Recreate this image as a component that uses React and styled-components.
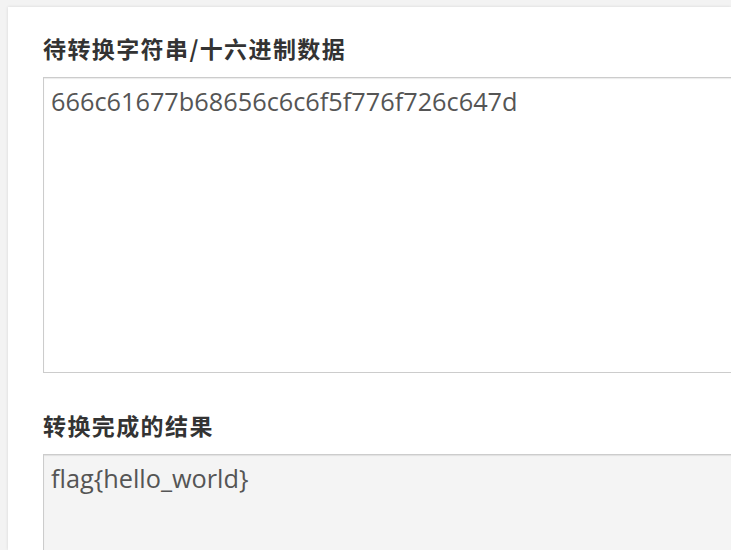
import React from "react";
import styled, { createGlobalStyle } from "styled-components";

const Global = createGlobalStyle`
  html, body { margin: 0; padding: 0; background: #f3f3f3; overflow: hidden; }
  body { font-family: "Open Sans", "Noto Sans CJK SC", sans-serif; }
`;

const Page = styled.div`
  padding: 7px 0 0 8px;
  height: 550px;
  width: 731px;
  box-sizing: border-box;
  overflow: hidden;
`;

const Card = styled.section`
  background: #fff;
  box-shadow: 0 0 3px rgba(0, 0, 0, 0.12);
  padding: 25px 0 0 35px;
  height: 100%;
  box-sizing: border-box;
  overflow: hidden;
`;

const Field = styled.div`
  display: flex;
  flex-direction: column;
  margin-top: ${(p) => p.$gap || 0}px;
`;

const Label = styled.label`
  font-family: "Noto Sans CJK SC", sans-serif;
  font-weight: 700;
  font-size: 23px;
  letter-spacing: 1.4px;
  line-height: 32px;
  color: #333;
  margin-bottom: 13px;
`;

const Area = styled.textarea`
  width: 760px;
  flex-shrink: 0;
  height: ${(p) => p.$h}px;
  box-sizing: border-box;
  border: 1px solid #ccc;
  border-radius: 0;
  box-shadow: inset 0 1px 1px rgba(0, 0, 0, 0.08);
  background: ${(p) => (p.readOnly ? "#f4f4f4" : "#fff")};
  color: #555;
  font-family: "Open Sans", sans-serif;
  font-size: 25.3px;
  line-height: 34px;
  padding: 6px 7px;
  resize: none;
  outline: none;
  margin: 0;
`;

export default function App() {
  return (
    <>
      <Global />
      <Page>
        <Card>
          <Field>
            <Label>待转换字符串/十六进制数据</Label>
            <Area $h={296} defaultValue="666c61677b68656c6c6f5f776f726c647d" />
          </Field>
          <Field $gap={36}>
            <Label>转换完成的结果</Label>
            <Area $h={200} readOnly value="flag{hello_world}" />
          </Field>
        </Card>
      </Page>
    </>
  );
}
